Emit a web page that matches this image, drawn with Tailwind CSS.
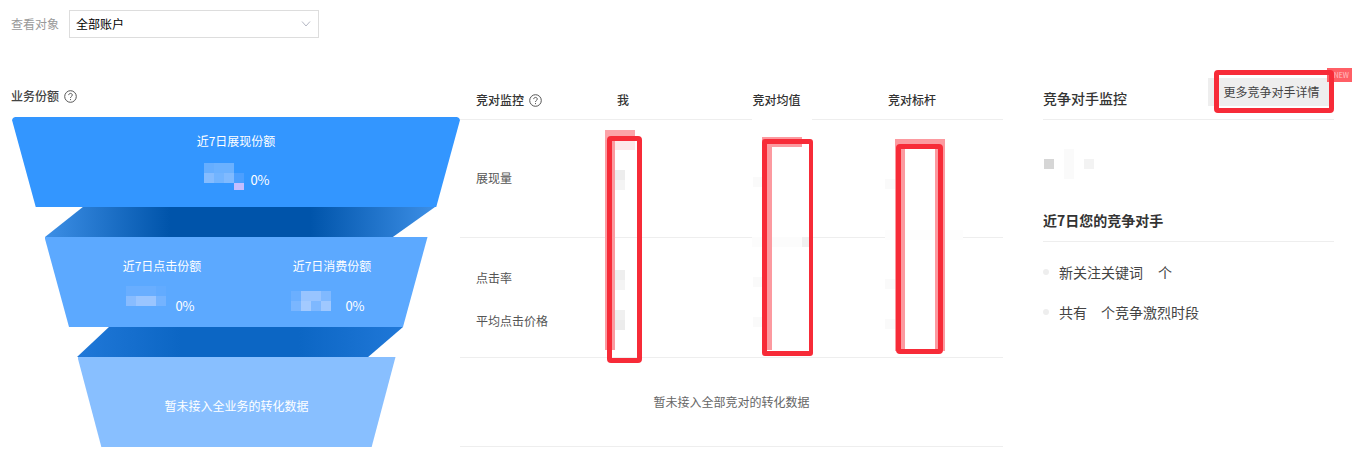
<!DOCTYPE html>
<html lang="zh-CN">
<head>
  <meta charset="UTF-8">
  <title>竞争对手监控</title>
  <script src="https://cdn.jsdelivr.net/npm/@tailwindcss/browser@4"></script>
</head>
<body class="bg-white font-['Noto_Sans_CJK_SC','Noto_Sans',sans-serif] text-xs text-[#333]">
  <div class="relative w-[1358px] h-[464px] overflow-hidden">

    <!-- Filter -->
    <div class="flex items-center h-[28px] mt-[10px] ml-[11px] gap-[10px]">
      <span class="text-[#999]">查看对象</span>
      <div class="flex items-center justify-between w-[250px] h-[28px] border border-[#ddd] pl-[6px] pr-[7px] text-black">
        <span>全部账户</span>
        <svg class="w-[10px] h-[6px]" viewBox="0 0 10 6" fill="none" stroke="#b4b8c4" stroke-width="1"><path d="M1 .5 5 5 9 .5"/></svg>
      </div>
    </div>

    <div class="flex mt-[30px]">
      <!-- Funnel -->
      <div class="w-[448px] ml-[12px] shrink-0">
        <div class="flex items-center h-[49px] pt-[7px] -ml-[1px] gap-[5px] font-medium text-[#444]">
          <span>业务份额</span>
          <svg class="w-[13px] h-[13px]" viewBox="0 0 13 13" fill="none" stroke="#555" stroke-width="1"><circle cx="6.5" cy="6.5" r="5.8"/><path d="M4.7 5.1c0-1 .8-1.7 1.8-1.7s1.8.7 1.8 1.6c0 1.4-1.8 1.4-1.8 2.9"/><path d="M6.5 9.1v1"/></svg>
        </div>

        <div class="h-[90px] w-[448px] bg-[#3396ff] [clip-path:polygon(0_3px,1px_1px,3px_0,calc(100%-3px)_0,calc(100%-1px)_1px,100%_3px,94.7%_100%,5.3%_100%)] text-white flex flex-col items-center pt-[15px]">
          <span class="leading-[18px]">近7日展现份额</span>
          <div class="flex items-end gap-[6px] mt-[13px] ml-[2px]">
            <div class="grid grid-cols-[repeat(4,10px)] auto-rows-[10px] h-[27px]">
              <i class="bg-[#66aeff]"></i><i class="bg-[#6bb1ff]"></i><i class="bg-[#6bb1ff]"></i><i></i>
              <i class="bg-[#85bcff]"></i><i class="bg-[#72b4ff]"></i><i class="bg-[#80baff]"></i><i class="bg-[#4c9fff]"></i>
              <i></i><i></i><i></i><i class="bg-[#c4bdff] h-[7px]"></i>
            </div>
            <span class="text-[13px] leading-[18px] mb-[1px]">0%</span>
          </div>
        </div>

        <div class="h-[30px] w-[390px] ml-[33px] bg-[linear-gradient(90deg,#3d8fe6,#0054aa_32%,#0054aa_68%,#3d8fe6)] [clip-path:polygon(9.7%_0,100%_0,89.2%_100%,0_100%)]"></div>

        <div class="h-[90px] w-[383px] ml-[32.5px] bg-[#5ca9ff] [clip-path:polygon(0_0,100%_0,93.6%_100%,6.4%_100%)] text-white flex justify-center pt-[20px] pl-[22px]">
          <div class="w-[170px] flex flex-col items-center">
            <span class="leading-[18px]">近7日点击份额</span>
            <div class="flex items-start gap-[9px] mt-[11px] -ml-[3px]">
              <div class="grid grid-cols-[repeat(4,10px)] auto-rows-[10px]">
                <i class="bg-[#69aeff]"></i><i class="bg-[#69aeff]"></i><i class="bg-[#69aeff]"></i><i class="bg-[#62abff]"></i>
                <i class="bg-[#88bcff]"></i><i class="bg-[#9ac5ff]"></i><i class="bg-[#9ac5ff]"></i><i class="bg-[#74b3ff]"></i>
              </div>
              <span class="text-[13px] leading-[18px] mt-[11px]">0%</span>
            </div>
          </div>
          <div class="w-[170px] flex flex-col items-center">
            <span class="leading-[18px]">近7日消费份额</span>
            <div class="flex items-start gap-[14px] mt-[16px] -ml-[8px]">
              <div class="grid grid-cols-[repeat(4,10px)] auto-rows-[10px]">
                <i class="bg-[#6bafff]"></i><i class="bg-[#98c4ff]"></i><i class="bg-[#98c4ff]"></i><i class="bg-[#80b9ff]"></i>
                <i class="bg-[#7ab6ff]"></i><i class="bg-[#a3caff]"></i><i class="bg-[#7eb8ff]"></i><i class="bg-[#9fc8ff]"></i>
              </div>
              <span class="text-[13px] leading-[18px] mt-[6px]">0%</span>
            </div>
          </div>
        </div>

        <div class="h-[30px] w-[326px] ml-[65px] bg-[linear-gradient(90deg,#2078d8,#0c66c4_32%,#0c66c4_68%,#2078d8)] [clip-path:polygon(9.8%_0,100%_0,89.3%_100%,0_100%)]"></div>

        <div class="h-[90px] w-[318px] ml-[65.5px] bg-[#88bfff] [clip-path:polygon(0_0,100%_0,92.5%_100%,7.5%_100%)] text-white flex items-center justify-center pt-[8px]">
          暂未接入全业务的转化数据
        </div>
      </div>

      <!-- Competitor table -->
      <div class="w-[543px] shrink-0">
        <div class="grid grid-cols-[141px_135.5px_135.5px_1fr] items-center h-[52px] pl-[16px] pt-[13px] font-medium border-b border-[#eee]">
          <div class="flex items-center gap-[5px]">
            <span>竞对监控</span>
            <svg class="w-[13px] h-[13px]" viewBox="0 0 13 13" fill="none" stroke="#555" stroke-width="1"><circle cx="6.5" cy="6.5" r="5.8"/><path d="M4.7 5.1c0-1 .8-1.7 1.8-1.7s1.8.7 1.8 1.6c0 1.4-1.8 1.4-1.8 2.9"/><path d="M6.5 9.1v1"/></svg>
          </div>
          <span>我</span><span>竞对均值</span><span>竞对标杆</span>
        </div>

        <div class="grid grid-cols-[141px_135.5px_135.5px_1fr] items-center h-[118px] pb-[2px] pl-[16px] border-b border-[#eee] text-[#555]">
          <span>展现量</span>
          <div class="-ml-[2px] mt-[5px]"><div class="w-[10px] h-[10px] bg-[#ededed]"></div><div class="w-[10px] h-[10px] bg-[#f4f4f4]"></div></div>
          <div class="w-[10px] h-[10px] bg-[#fafafa] mt-[9px]"></div>
          <div class="w-[10px] h-[10px] bg-[#fafafa] -ml-[3px] mt-[13px]"></div>
        </div>

        <div class="h-[120px] pt-[18px] pl-[16px] border-b border-[#eee] text-[#555]">
          <div class="grid grid-cols-[141px_135.5px_135.5px_1fr] items-center h-[43px]">
            <span>点击率</span>
            <div class="-ml-[2px] mt-[5px]"><div class="w-[10px] h-[10px] bg-[#eeeeee]"></div><div class="w-[10px] h-[10px] bg-[#f4f4f4]"></div></div>
            <div class="w-[10px] h-[10px] bg-[#fafafa] mt-[9px]"></div>
            <div class="w-[10px] h-[10px] bg-[#fafafa] -ml-[3px] mt-[13px]"></div>
          </div>
          <div class="grid grid-cols-[141px_135.5px_135.5px_1fr] items-center h-[43px]">
            <span>平均点击价格</span>
            <div class="-ml-[2px] -mt-[1px]"><div class="w-[10px] h-[10px] bg-[#f0f0f0]"></div><div class="w-[10px] h-[10px] bg-[#ececec]"></div></div>
            <div class="w-[10px] h-[10px] bg-[#fafafa] mt-[3px]"></div>
            <div class="w-[10px] h-[10px] bg-[#fafafa] -ml-[3px] mt-[7px]"></div>
          </div>
        </div>

        <div class="h-[89px] flex items-center justify-center border-b border-[#eee] text-[#666] pb-[1px]">
          暂未接入全部竞对的转化数据
        </div>
      </div>

      <!-- Right panel -->
      <div class="w-[291px] ml-[40px] shrink-0">
        <div class="flex items-center justify-between h-[52px] pt-[9px] border-b border-[#eee]">
          <span class="text-sm font-medium">竞争对手监控</span>
          <div class="relative -mt-[13px] w-[124px] h-[28px] mr-[2px] bg-[#eeeeee] flex items-center justify-center text-[#444] pl-[3px]">
            更多竞争对手详情
          </div>
        </div>
        <div class="flex items-center h-[30px] mt-[29px] pl-[1px] gap-[10px]">
          <i class="w-[10px] h-[10px] bg-[#d6d6d6]"></i>
          <i class="w-[10px] h-[30px] bg-[#fafafa]"></i>
          <i class="w-[10px] h-[10px] bg-[#f3f3f3]"></i>
        </div>
        <div class="flex items-center h-[41px] mt-[22px] text-sm font-bold pb-[2px] border-b border-[#eee]">近7日您的竞争对手</div>
        <ul class="text-sm text-[#444] mt-[10px]">
          <li class="flex items-center h-[40px]"><i class="w-[6px] h-[6px] rounded-full bg-[#eeeeee] mr-[10px]"></i><span>新关注关键词</span><span class="ml-[15px]">个</span></li>
          <li class="flex items-center h-[40px]"><i class="w-[6px] h-[6px] rounded-full bg-[#eeeeee] mr-[10px]"></i><span>共有</span><span class="ml-[14px]">个竞争激烈时段</span></li>
        </ul>
      </div>
    </div>

    <!-- Review marks drawn over the screenshot -->
    <div class="absolute left-[605px] top-[130px] w-[30px] h-[10px] bg-[#fca3a9]"></div>
    <div class="absolute left-[615px] top-[140px] w-[20px] h-[10px] bg-[#fde8ea]"></div>
    <div class="absolute left-[605px] top-[140px] w-[10px] h-[210px] bg-[#fc9aa0]"></div>
    <div class="absolute left-[607px] top-[136px] w-[35px] h-[227px] border-[5px] border-[#f72b38] rounded-[4px]"></div>

    <div class="absolute left-[752px] top-[113px] w-[60px] h-[8px] bg-white"></div>
    <div class="absolute left-[752px] top-[237px] w-[60px] h-[10px] bg-[#fcfcfc]"></div>
    <div class="absolute left-[802px] top-[237px] w-[10px] h-[10px] bg-[#f0f0f0]"></div>
    <div class="absolute left-[762px] top-[137px] w-[40px] h-[10px] bg-[#fc9aa0]"></div>
    <div class="absolute left-[762px] top-[147px] w-[10px] h-[203px] bg-[#fc9aa0]"></div>
    <div class="absolute left-[762px] top-[139px] w-[51px] h-[217px] border-[5px] border-r-[4px] border-[#f72b38] rounded-[3px]"></div>

    <div class="absolute left-[885px] top-[230px] w-[78px] h-[10px] bg-[#fdfdfd]"></div>
    <div class="absolute left-[895px] top-[139px] w-[50px] h-[10px] bg-[#fc9aa0]"></div>
    <div class="absolute left-[895px] top-[149px] w-[10px] h-[202px] bg-[#fc9aa0]"></div>
    <div class="absolute left-[935px] top-[149px] w-[10px] h-[202px] bg-[#fc9aa0]"></div>
    <div class="absolute left-[896px] top-[144px] w-[47px] h-[210px] border-[5px] border-[#f72b38] rounded-[4px]"></div>

    <div class="absolute left-[1327px] top-[68px] w-[25px] h-[14px] bg-[#ff5f66] text-white/60 text-[7px] leading-[14px] text-right pr-[3px]">NEW</div>
    <div class="absolute left-[1214px] top-[70px] w-[120px] h-[43px] border-[5px] border-[#f72b38] rounded-[4px]"></div>
  </div>
</body>
</html>
